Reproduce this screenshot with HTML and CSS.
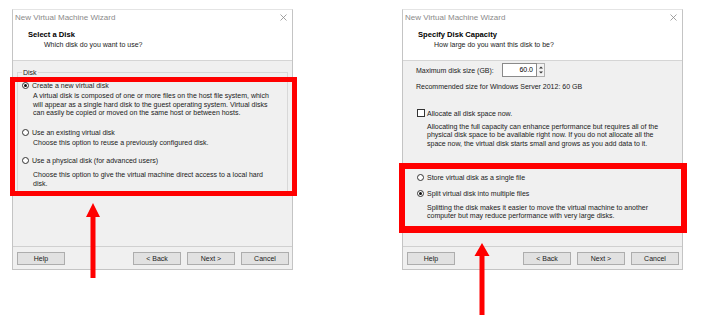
FILE: index.html
```html
<!DOCTYPE html>
<html>
<head>
<meta charset="utf-8">
<link rel="stylesheet" href="styles.css">
</head>
<body>
<div class="stage">
  <div class="window">
    <div class="titlebar">
      <span class="title">New Virtual Machine Wizard</span>
      <svg class="close" width="7" height="7" viewBox="0 0 7 7"><path d="M0.5 0.5L6.5 6.5M6.5 0.5L0.5 6.5" stroke="#8c8c8c" stroke-width="0.8" fill="none"/></svg>
    </div>
    <div class="header">
      <div class="h-title">Select a Disk</div>
      <div class="h-sub">Which disk do you want to use?</div>
    </div>
    <div class="body">
      <fieldset class="group">
        <legend>Disk</legend>
        <div class="opt"><span class="radio on"></span>Create a new virtual disk</div>
        <div class="desc d1">A virtual disk is composed of one or more files on the host file system, which<br>will appear as a single hard disk to the guest operating system. Virtual disks<br>can easily be copied or moved on the same host or between hosts.</div>
        <div class="opt o2"><span class="radio"></span>Use an existing virtual disk</div>
        <div class="desc d2">Choose this option to reuse a previously configured disk.</div>
        <div class="opt o3"><span class="radio"></span>Use a physical disk (for advanced users)</div>
        <div class="desc d3">Choose this option to give the virtual machine direct access to a local hard<br>disk.</div>
      </fieldset>
    </div>
    <div class="footer">
      <span class="btn">Help</span>
      <span class="spacer"></span>
      <span class="btn">&lt; Back</span>
      <span class="btn">Next &gt;</span>
      <span class="btn">Cancel</span>
    </div>
  </div>

  <div class="window">
    <div class="titlebar">
      <span class="title">New Virtual Machine Wizard</span>
      <svg class="close" width="7" height="7" viewBox="0 0 7 7"><path d="M0.5 0.5L6.5 6.5M6.5 0.5L0.5 6.5" stroke="#8c8c8c" stroke-width="0.8" fill="none"/></svg>
    </div>
    <div class="header">
      <div class="h-title">Specify Disk Capacity</div>
      <div class="h-sub">How large do you want this disk to be?</div>
    </div>
    <div class="body body-right">
      <div class="size-row">
        <span class="size-label">Maximum disk size (GB):</span>
        <span class="input">60.0</span>
        <span class="spin">
          <svg width="6" height="12" viewBox="0 0 6 12"><path d="M1 4.5L3 2.5L5 4.5Z M1 7.5L3 9.5L5 7.5Z" fill="#333"/></svg>
        </span>
      </div>
      <div class="line rec">Recommended size for Windows Server 2012: 60 GB</div>
      <div class="opt chk-row"><span class="check"></span>Allocate all disk space now.</div>
      <div class="desc r1">Allocating the full capacity can enhance performance but requires all of the<br>physical disk space to be available right now. If you do not allocate all the<br>space now, the virtual disk starts small and grows as you add data to it.</div>
      <div class="opt r-store"><span class="radio"></span>Store virtual disk as a single file</div>
      <div class="opt r-split"><span class="radio on"></span>Split virtual disk into multiple files</div>
      <div class="desc r2">Splitting the disk makes it easier to move the virtual machine to another<br>computer but may reduce performance with very large disks.</div>
    </div>
    <div class="footer">
      <span class="btn">Help</span>
      <span class="spacer"></span>
      <span class="btn">&lt; Back</span>
      <span class="btn">Next &gt;</span>
      <span class="btn">Cancel</span>
    </div>
  </div>

  <div class="mark mark-left"></div>
  <div class="mark mark-right"></div>
  <svg class="arrow arrow-left" width="16" height="76" viewBox="0 0 16 76"><path d="M8 0L15 14L10.5 14L10.5 75L5.5 75L5.5 14L1 14Z" fill="#ff0000"/></svg>
  <svg class="arrow arrow-right" width="16" height="73" viewBox="0 0 16 73"><path d="M8 0L15.5 13L10.5 13L10.5 72L5.5 72L5.5 13L0.5 13Z" fill="#ff0000"/></svg>
</div>
</body>
</html>
```

FILE: styles.css
```css
* { box-sizing: border-box; }
html, body { margin: 0; padding: 0; background: #ffffff; }
body {
  width: 703px;
  height: 324px;
  overflow: hidden;
  font-family: "Liberation Sans", Arial, sans-serif;
  font-size: 7px;
  color: #1a1a1a;
}
.stage {
  position: relative;
  width: 703px;
  height: 324px;
  display: flex;
  align-items: flex-start;
  gap: 109px;
  padding: 9px 0 0 12px;
}
.window {
  width: 281px;
  height: 261px;
  border: 1px solid #c4c4c4;
  border-top-color: #e4e4e4;
  display: flex;
  flex-direction: column;
  background: #f0f0f0;
}
.titlebar {
  height: 15px;
  background: #ffffff;
  display: flex;
  align-items: center;
  justify-content: space-between;
  padding: 0 5px 1px 2px;
}
.title {
  font-size: 8px;
  line-height: 13px;
  color: #8a8a8a;
}
.close { display: block; margin-top: 1px; }
.header {
  height: 36px;
  background: #ffffff;
  border-bottom: 1px solid #d5d5d5;
  padding: 5px 0 0 15px;
}
.h-title {
  font-weight: bold;
  font-size: 7.6px;
  line-height: 10px;
  color: #000;
}
.h-sub {
  line-height: 10px;
  padding-left: 16px;
  color: #1a1a1a;
}
.body {
  flex: 1;
  display: flex;
  flex-direction: column;
  padding: 0 4px;
}
.group {
  margin: 7px 0 0 0;
  padding: 4px 4px 5px 4px;
  border: 1px solid #d8d8d8;
  min-width: 0;
  height: 125px;
}
.group legend {
  padding: 0 1px;
  margin-left: 0;
  line-height: 9px;
  font-size: 7px;
  color: #1a1a1a;
}
.opt {
  display: flex;
  align-items: center;
  height: 9px;
  line-height: 9px;
  white-space: nowrap;
}
.radio {
  width: 7px;
  height: 7px;
  border: 1px solid #333;
  border-radius: 50%;
  background: #fff;
  margin-right: 3px;
  display: flex;
  align-items: center;
  justify-content: center;
  flex: none;
}
.radio.on::after {
  content: "";
  width: 3px;
  height: 3px;
  border-radius: 50%;
  background: #111;
}
.check {
  width: 8px;
  height: 8px;
  border: 1px solid #333;
  background: #fff;
  margin-right: 2px;
  flex: none;
}
.desc {
  line-height: 8.5px;
  white-space: nowrap;
  padding-left: 11px;
  color: #1a1a1a;
}
.d1 { margin-top: 2.25px; }
.o2 { margin-top: 10.25px; }
.d2 { margin-top: 2.25px; }
.o3 { margin-top: 8.25px; }
.d3 { margin-top: 6.25px; }

.body-right { padding: 0 0 0 13px; }
.size-row {
  margin-top: 2px;
  height: 14px;
  display: flex;
  align-items: center;
}
.size-label { width: 86px; line-height: 9px; }
.input {
  width: 35px;
  height: 14px;
  border: 1px solid #8a8a8a;
  background: #fff;
  text-align: right;
  line-height: 12px;
  padding-right: 3px;
  font-size: 7px;
  color: #000;
}
.spin {
  width: 8px;
  height: 14px;
  border: 1px solid #b0b0b0;
  border-left: none;
  background: #f3f3f3;
  display: flex;
  align-items: center;
  justify-content: center;
}
.spin svg { display: block; }
.line { line-height: 9px; white-space: nowrap; }
.rec { margin-top: 4.5px; }
.chk-row { margin-top: 18px; padding-left: 1px; }
.r1 { margin-top: 5.25px; padding-left: 11px; }
.r-store { margin-top: 24.25px; padding-left: 1px; }
.r-split { margin-top: 7px; padding-left: 1px; }
.r2 { margin-top: 6.25px; padding-left: 11px; }

.footer {
  height: 23px;
  border-top: 1px solid #d0d0d0;
  display: flex;
  align-items: flex-start;
  gap: 6px;
  padding: 5px 3px 0 4px;
}
.spacer { flex: 1; }
.btn {
  width: 48px;
  height: 13px;
  border: 1px solid #adadad;
  background: #e1e1e1;
  text-align: center;
  line-height: 11px;
  font-size: 7px;
  color: #1a1a1a;
}

.mark {
  position: absolute;
  border: 5px solid #ff0000;
}
.mark-left { left: 10px; top: 77px; width: 287px; height: 119px; }
.mark-right { left: 399px; top: 163px; width: 288px; height: 70px; border-width: 6px 6px 7px 6px; }
.arrow { position: absolute; display: block; }
.arrow-left { left: 85px; top: 203px; }
.arrow-right { left: 474px; top: 243px; }
```
